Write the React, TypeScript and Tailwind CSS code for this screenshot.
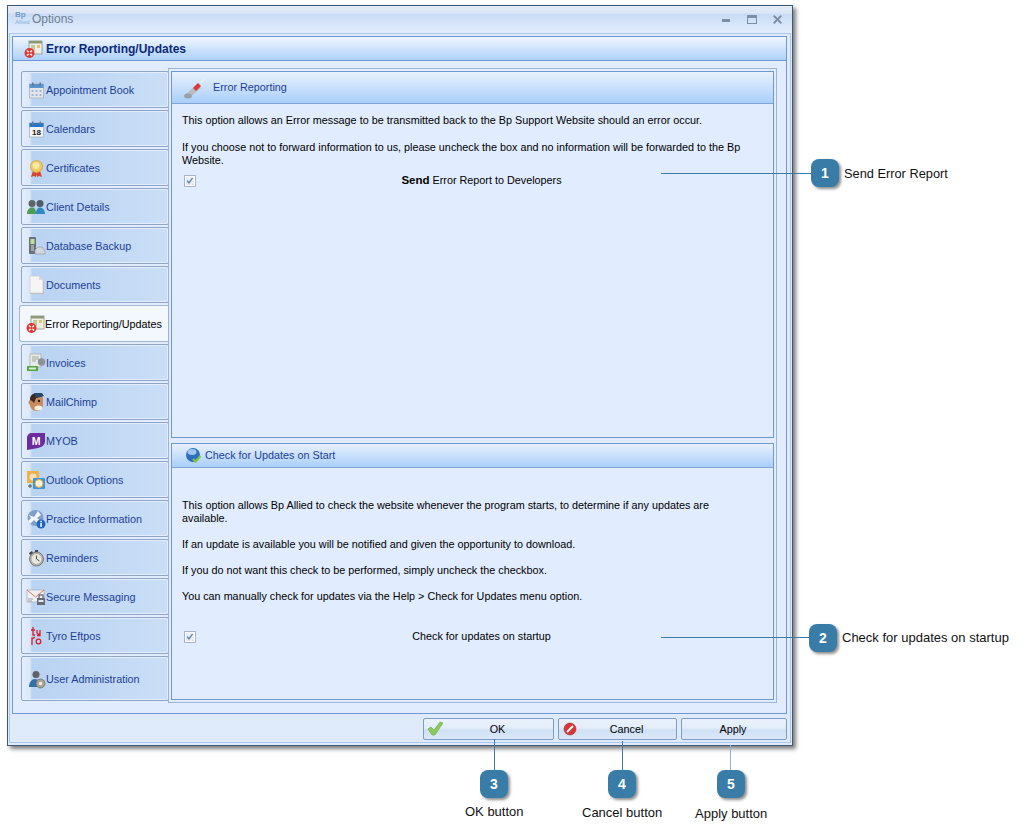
import React from 'react';
import { X } from 'lucide-react';

const Glyph = ({ children }: { children: React.ReactNode }) => (
  <svg width="20" height="20" viewBox="0 0 20 20" className="shrink-0">
    {children}
  </svg>
);

const CalendarIcon = ({ label }: { label?: string }) => (
  <Glyph>
    <rect x="3.500" y="4" width="14" height="14" fill={label ? '#f4f5f6' : '#e4e6ea'} stroke="#a3abb5" strokeWidth="0.7" />
    <rect x="3.500" y="4" width="14" height="4" fill={label ? '#2577c8' : '#5b93cf'} />
    <rect x="6" y="2.500" width="1.500" height="3.500" fill="#6b7887" />
    <rect x="13.500" y="2.500" width="1.500" height="3.500" fill="#6b7887" />
    {label ? (
      <text x="10.500" y="16" fontSize="8" fontWeight="700" textAnchor="middle" fill="#222" fontFamily="Liberation Sans, sans-serif">
        {label}
      </text>
    ) : (
      <path d="M5.500 10h2v2h-2zM9.500 10h2v2h-2zM13.500 10h2v2h-2zM5.500 14h2v2h-2zM9.500 14h2v2h-2zM13.500 14h2v2h-2z" fill="#9fb5d8" />
    )}
  </Glyph>
);

const ErrorIcon = () => (
  <Glyph>
    <rect x="6" y="2" width="13" height="13" fill="#eef0e6" stroke="#8f9385" strokeWidth="0.8" />
    <rect x="6" y="2" width="13" height="2.500" fill="#8d9a78" />
    <rect x="8" y="6" width="4" height="6" fill="#c1c9a4" />
    <rect x="14" y="6" width="3" height="3" fill="#e3c36b" />
    <circle cx="6.500" cy="14" r="5" fill="#d93a36" />
    <path d="M4 11.500l5 5M9 11.500l-5 5" stroke="#f8e3e0" strokeWidth="1.700" />
    <circle cx="6.500" cy="14" r="1.300" fill="#d93a36" />
  </Glyph>
);

const tabIcons: Record<string, React.ReactNode> = {
  'Appointment Book': <CalendarIcon />,
  Calendars: <CalendarIcon label="18" />,
  Certificates: (
    <Glyph>
      <path d="M7 13l-2 6 3-1 2 1 1-6zM14 13l2 6-3-1-2 1-1-6z" fill="#d8432f" />
      <circle cx="10.500" cy="8.500" r="6" fill="#f2c95c" stroke="#cda241" strokeWidth="0.8" />
      <circle cx="10" cy="7.500" r="3.500" fill="#f9e7a4" />
    </Glyph>
  ),
  'Client Details': (
    <Glyph>
      <circle cx="6" cy="6.500" r="3.500" fill="#5d6468" />
      <path d="M1 17c0-4 2-6.500 5-6.500s4 2.500 4 6.500z" fill="#4f9b58" />
      <circle cx="14" cy="6.500" r="3.500" fill="#4f5b66" />
      <path d="M10 17c0-4 1.500-6.500 4-6.500s5 2.500 5 6.500z" fill="#2f8ac4" />
    </Glyph>
  ),
  'Database Backup': (
    <Glyph>
      <rect x="3" y="1" width="7" height="17" rx="1" fill="#6a7279" />
      <rect x="4.500" y="3" width="4" height="5" fill="#bfe09b" />
      <path d="M5 10h3M5 12h3M5 14h3" stroke="#d5d9de" />
      <path d="M9 14l3-3h4l3 4v3H9z" fill="#d3d7dc" stroke="#8a929b" strokeWidth="0.6" />
    </Glyph>
  ),
  Documents: (
    <Glyph>
      <path d="M4 2h9l5 5v12H4z" fill="#b8bcc0" />
      <path d="M4 1h9l4 4v13H4z" fill="#f5f5f4" stroke="#c9ccd0" strokeWidth="0.7" />
      <path d="M13 1v4h4z" fill="#d9dbde" />
    </Glyph>
  ),
  'Error Reporting/Updates': <ErrorIcon />,
  Invoices: (
    <Glyph>
      <rect x="4" y="1" width="11" height="13" fill="#e9ebe7" stroke="#a2a79f" strokeWidth="0.7" />
      <path d="M6 4h7M6 6h7M6 8h4" stroke="#a2a79f" />
      <circle cx="15.500" cy="9" r="3.700" fill="#8c9298" />
      <rect x="1" y="13" width="11" height="5" fill="#56a447" />
      <rect x="3" y="14.500" width="7" height="2" fill="#d8efce" />
    </Glyph>
  ),
  MailChimp: (
    <Glyph>
      <path d="M4 8c0-4 3-6 7-6s6 2 6 5v6c0 4-3 6-6 6-4 0-7-3-7-6-2-1-2-4 0-5z" fill="#c98b5b" />
      <path d="M4 8c0-5 3-7 7-7 3 0 5 1 6 3l-7 2-2 5-2-2z" fill="#3d2b23" />
      <path d="M8 1l8 0 2 3-8 2z" fill="#27496e" />
      <ellipse cx="12.500" cy="16" rx="4" ry="2.500" fill="#f5efe3" />
      <circle cx="13" cy="9" r="1.200" fill="#1b1b1b" />
    </Glyph>
  ),
  MYOB: (
    <Glyph>
      <path d="M6 2h13v8c0 4-3 6-7 7l-11 2V7c0-3 2-5 5-5z" fill="#6d2c9e" />
      <text x="10" y="13.500" fontSize="10.500" fontWeight="700" textAnchor="middle" fill="#fff" fontFamily="Liberation Sans, sans-serif">
        M
      </text>
    </Glyph>
  ),
  'Outlook Options': (
    <Glyph>
      <rect x="1" y="1" width="12" height="12" fill="#efb04e" />
      <circle cx="7" cy="7" r="3.500" fill="#f9e3b5" />
      <rect x="7" y="8" width="12" height="11" rx="1" fill="#3f96d6" />
      <circle cx="13" cy="13.500" r="4" fill="#fff3d6" stroke="#e9a63b" />
      <path d="M2 16h4M4 14v4" stroke="#4a5560" />
    </Glyph>
  ),
  'Practice Information': (
    <Glyph>
      <circle cx="9.500" cy="9" r="8" fill="#7f9fcc" />
      <path d="M3 6l5 2 4-6 3 4-4 3 5 4-4 2-4-4-4 4-2-3 3-3z" fill="#f2f5f9" />
      <circle cx="15" cy="15" r="4.500" fill="#1d66c0" />
      <rect x="14.300" y="14" width="1.500" height="4" fill="#fff" />
      <rect x="14.300" y="11.800" width="1.500" height="1.500" fill="#fff" />
    </Glyph>
  ),
  Reminders: (
    <Glyph>
      <circle cx="10.500" cy="11" r="7" fill="#b0afa9" stroke="#6a6965" strokeWidth="0.8" />
      <circle cx="10.500" cy="11" r="5" fill="#e9e6dc" />
      <path d="M10.500 11V7.500M10.500 11l3 2" stroke="#555" />
      <rect x="9" y="2" width="3" height="2" fill="#444" />
      <path d="M3 5l3-2 1 2-3 2z" fill="#444" />
    </Glyph>
  ),
  'Secure Messaging': (
    <Glyph>
      <rect x="1" y="3" width="17" height="12" fill="#eef0f3" stroke="#a5acb5" strokeWidth="0.7" />
      <path d="M1 3l8.500 7L18 3" fill="none" stroke="#d87a5f" />
      <path d="M2 12h5M2 14h4" stroke="#9aa1aa" />
      <rect x="11" y="11" width="8" height="7" fill="#656c75" />
      <rect x="13" y="8" width="4" height="4" fill="none" stroke="#656c75" strokeWidth="1.300" />
      <rect x="12.500" y="13" width="5" height="2" fill="#e4e7ea" />
    </Glyph>
  ),
  'Tyro Eftpos': (
    <Glyph>
      <path d="M7 1v8h2M5 4h4M11 4v3c0 1.500 3 1.500 3 0V4M14 7v2.500h-3M6 11.500v7.500M6 13c1-1 2-1.500 3-1.500" fill="none" stroke="#d8202a" strokeWidth="1.300" />
      <circle cx="12.500" cy="15.500" r="2.300" fill="none" stroke="#d8202a" strokeWidth="1.300" />
    </Glyph>
  ),
  'User Administration': (
    <Glyph>
      <circle cx="10" cy="5.500" r="3.500" fill="#5f6164" />
      <path d="M3 18c0-5 3-8 6-8s5 3 5 8z" fill="#2f71ad" />
      <circle cx="14.500" cy="14.500" r="4.500" fill="#a9a398" stroke="#6d675d" strokeWidth="0.7" />
      <circle cx="14.500" cy="14.500" r="1.700" fill="#f2efe6" />
    </Glyph>
  ),
};

const tabs = [
  'Appointment Book',
  'Calendars',
  'Certificates',
  'Client Details',
  'Database Backup',
  'Documents',
  'Error Reporting/Updates',
  'Invoices',
  'MailChimp',
  'MYOB',
  'Outlook Options',
  'Practice Information',
  'Reminders',
  'Secure Messaging',
  'Tyro Eftpos',
];

const Tab = ({ name, className = 'h-[37px]' }: { name: string; className?: string }) => (
  <div className={`${className} flex items-center pl-[4px] text-[#1c3f95] rounded-[2px] border border-[#8fa6c8] shadow-[inset_0_0_0_1px_#e3edfb] bg-[linear-gradient(90deg,#e4eefb_0,#dce8f9_8px,#b9d3f2_10px,#cadef7_100%)]`}>
    {tabIcons[name]}
    <span className="whitespace-nowrap pt-[2px]">{name}</span>
  </div>
);

const SelectedTab = ({ name }: { name: string }) => (
  <div className="relative z-10 h-[37px] w-[149px] -ml-[2px] flex items-center pl-[5px] text-black bg-[#f3f8ff] border border-r-0 border-[#a3b8d6] rounded-l-[3px]">
    {tabIcons[name]}
    <span className="whitespace-nowrap pt-[2px]">{name}</span>
  </div>
);

const Checkbox = () => (
  <span className="block w-[12px] h-[12px] border border-[#a9b6c6] bg-[#e8edf3] shrink-0 shadow-[inset_0_0_0_1px_#fff]">
    <svg viewBox="0 0 12 12" width="10" height="10">
      <path d="M2.500 5.500l2.200 2.700L9 2.500" fill="none" stroke="#5f7ea6" strokeWidth="1.600" />
    </svg>
  </span>
);

const PanelHeader = ({ className, children }: { className: string; children: React.ReactNode }) => (
  <div className={`${className} flex items-center text-[#1c3f95] border-b border-[#7fa4d6] bg-[linear-gradient(180deg,#e8f1fd,#aacffa)] shrink-0`}>
    {children}
  </div>
);

const FooterButton = ({ className, icon, label }: { className: string; icon?: React.ReactNode; label: string }) => (
  <div className={`${className} relative h-[22px] flex items-center justify-center text-black border border-[#7d9cc6] rounded-[2px] bg-[linear-gradient(180deg,#e9f1fc_0,#e4edfa_45%,#cfe0f5_55%,#dbe8f9_100%)]`}>
    {icon && <span className="absolute left-[2px] top-0">{icon}</span>}
    {label}
  </div>
);

const Badge = ({ n, className }: { n: number; className: string }) => (
  <div className={`${className} absolute w-[28px] h-[28px] flex items-center justify-center rounded-[8px] bg-[#3a7ca8] text-white font-bold text-[14px] shadow-[2px_2px_3px_rgba(0,0,0,0.45)]`}>
    {n}
  </div>
);

export default function App() {
  return (
    <div className="relative w-[1025px] h-[836px] bg-white overflow-hidden pl-[7px] pt-[5px] text-[10.800px] leading-[13px] font-['Liberation_Sans',Arial,sans-serif]">
      <div className="w-[786px] h-[741px] flex flex-col border border-[#3e5878] bg-[#dfeafb] shadow-[3px_3px_4px_rgba(0,0,0,0.5)]">
        <div className="h-[27px] shrink-0 flex items-center pl-[5px] pr-[8px] bg-[linear-gradient(180deg,#e3ebf6_0,#dde7f5_25%,#c9dcf5_30%,#e2eefd_100%)]">
          <span className="w-[19px] h-[19px] pl-[2px] text-[8px] leading-[9px] text-[#6f9ccd] font-bold">
            Bp
            <span className="block text-[6px] leading-[7px] font-normal text-[#8fb0d6]">Allied</span>
          </span>
          <span className="text-[12px] text-[#6c7d93]">Options</span>
          <div className="ml-auto flex items-center text-[#7d8fa8]">
            <span className="block w-[8px] h-[3px] mt-[2px] bg-[#7d8fa8]" />
            <span className="block w-[10px] h-[9px] ml-[17px] border border-[#7d8fa8] border-t-[3px]" />
            <X size={13} strokeWidth={3.500} className="ml-[14px]" />
          </div>
        </div>
        <div className="flex-1 flex flex-col mx-[1px] mb-[2px] border border-[#a9c6ec] pl-[2px] pr-[3px] pt-[2px] min-h-0">
          <div className="h-[678px] flex flex-col border border-[#6e98d0] bg-[#e1edfe] shrink-0">
            <div className="h-[24px] shrink-0 flex items-center pl-[10px] gap-[3px] font-bold text-[#0b2a78] text-[12px] border-b border-[#6e98d0] bg-[linear-gradient(180deg,#f0f6fe,#aed1fa)]">
              <ErrorIcon />
              <span className="pt-[2px]">Error Reporting/Updates</span>
            </div>
            <div className="flex-1 flex pt-[7px] pb-[10px] min-h-0">
              <div className="w-[156px] shrink-0 flex flex-col gap-[2px] pl-[8px] pt-[3px]">
                {tabs.map(name =>
                  name === 'Error Reporting/Updates' ? (
                    <SelectedTab key={name} name={name} />
                  ) : (
                    <Tab key={name} name={name} />
                  )
                )}
                <Tab name="User Administration" className="h-[45px]" />
              </div>
              <div className="w-[609px] flex flex-col gap-[5px] border border-[#9db4d6] p-[2px] -ml-[1px]">
                <div className="h-[367px] shrink-0 border border-[#6e98d0] flex flex-col">
                  <PanelHeader className="h-[32px] pl-[12px] gap-[7px]">
                    <svg width="22" height="22" viewBox="0 0 22 22" className="shrink-0">
                      <path d="M2 21l-1-3 12-11 4 4-12 10z" fill="#b9bcc1" />
                      <path d="M9 11l5-5 3 3-5 5z" fill="#d83a3a" />
                      <path d="M16 6l5-5" stroke="#e8eef6" strokeWidth="1.500" />
                      <ellipse cx="4" cy="19" rx="4" ry="2.500" fill="#9aa0a7" />
                    </svg>
                    <span>Error Reporting</span>
                  </PanelHeader>
                  <div className="flex-1 px-[10px] pt-[10px] text-black">
                    <p>This option allows an Error message to be transmitted back to the Bp Support Website should an error occur.</p>
                    <p className="mt-[14px] w-[572px]">If you choose not to forward information to us, please uncheck the box and no information will be forwarded to the Bp Website.</p>
                    <div className="mt-[7px] flex items-center pl-[2px]">
                      <Checkbox />
                      <span className="flex-1 text-center pl-[4px]">
                        <b className="text-[11.500px]">Send</b> Error Report to Developers
                      </span>
                    </div>
                  </div>
                </div>
                <div className="flex-1 border border-[#6e98d0] flex flex-col min-h-0">
                  <PanelHeader className="h-[24px] pl-[13px] gap-[3px]">
                    <svg width="17" height="17" viewBox="0 0 17 17" className="shrink-0">
                      <circle cx="8" cy="8" r="7" fill="#2f6fc0" />
                      <ellipse cx="7" cy="5" rx="4.500" ry="3" fill="#a3c8ef" />
                      <path d="M8 12l2.500 2.500L15.500 9" fill="none" stroke="#7ec63a" strokeWidth="2.200" />
                    </svg>
                    <span>Check for Updates on Start</span>
                  </PanelHeader>
                  <div className="flex-1 px-[10px] pt-[31px] text-black">
                    <p className="w-[572px]">This option allows Bp Allied to check the website whenever the program starts, to determine if any updates are available.</p>
                    <p className="mt-[13px]">If an update is available you will be notified and given the opportunity to download.</p>
                    <p className="mt-[13px]">If you do not want this check to be performed, simply uncheck the checkbox.</p>
                    <p className="mt-[13px]">You can manually check for updates via the Help &gt; Check for Updates menu option.</p>
                    <div className="mt-[27px] flex items-center pl-[2px]">
                      <Checkbox />
                      <span className="flex-1 text-center pl-[4px]">Check for updates on startup</span>
                    </div>
                  </div>
                </div>
              </div>
            </div>
          </div>
          <div className="flex-1 flex items-start justify-end gap-[4px] pt-[4px]">
            <FooterButton
              className="w-[131px] pl-[18px]"
              label="OK"
              icon={
                <svg width="18" height="20" viewBox="0 0 18 20">
                  <path d="M2 10l3-2 3 3 6-8 3 1-8 12h-3z" fill="#8cc95c" stroke="#6aa845" strokeWidth="0.600" />
                </svg>
              }
            />
            <FooterButton
              className="w-[119px] pl-[18px]"
              label="Cancel"
              icon={
                <svg width="18" height="20" viewBox="0 0 18 20">
                  <circle cx="9" cy="10" r="6" fill="#d8373a" stroke="#a92628" strokeWidth="0.600" />
                  <path d="M6 13l6-6" stroke="#fff" strokeWidth="1.800" />
                </svg>
              }
            />
            <FooterButton className="w-[106px] pr-[2px]" label="Apply" />
          </div>
        </div>
      </div>

      <div className="absolute left-[661px] top-[173px] w-[150px] h-px bg-[#3a7ca8]" />
      <div className="absolute left-[661px] top-[637px] w-[149px] h-px bg-[#3a7ca8]" />
      <div className="absolute left-[494px] top-[739px] w-px h-[32px] bg-[#3a7ca8]" />
      <div className="absolute left-[622px] top-[741px] w-px h-[30px] bg-[#3a7ca8]" />
      <div className="absolute left-[730px] top-[745px] w-px h-[26px] bg-[#8db4cf]" />

      <Badge n={1} className="left-[811px] top-[159px]" />
      <Badge n={2} className="left-[809px] top-[624px]" />
      <Badge n={3} className="left-[480px] top-[770px]" />
      <Badge n={4} className="left-[608px] top-[770px]" />
      <Badge n={5} className="left-[717px] top-[770px]" />

      <span className="absolute left-[844px] top-[166px] text-[12.800px] leading-[15px] text-[#111]">Send Error Report</span>
      <span className="absolute left-[842px] top-[630px] text-[13px] leading-[15px] text-[#111]">Check for updates on startup</span>
      <span className="absolute left-[465px] top-[804px] text-[13px] leading-[15px] text-[#111]">OK button</span>
      <span className="absolute left-[582px] top-[805px] text-[13px] leading-[15px] text-[#111]">Cancel button</span>
      <span className="absolute left-[695px] top-[806px] text-[13px] leading-[15px] text-[#111]">Apply button</span>
    </div>
  );
}
